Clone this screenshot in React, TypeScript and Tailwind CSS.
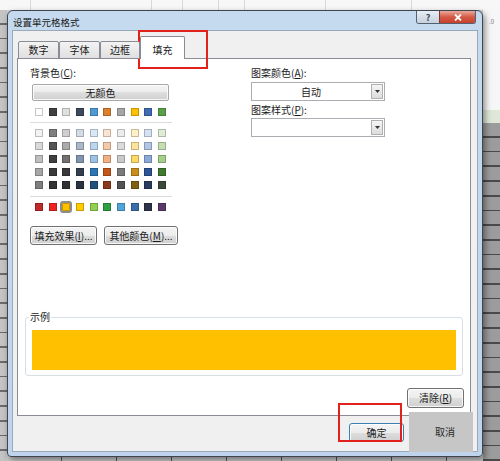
import type { ReactNode } from "react";

const FONT = "font-['Noto_Sans_CJK_SC','Noto_Sans',sans-serif]";

const topRow = ["#ffffff", "#404040", "#e0e0e0", "#3d4a5c", "#4e9bd4", "#d9822b", "#a6a6a6", "#ffc000", "#3f6cb4", "#5aa04a"];

const tintRows = [
  ["#f2f2f2", "#7f7f7f", "#cfcfcf", "#d2dbe6", "#d8e8f6", "#fbe3d3", "#ececec", "#fff0c8", "#d6e1f2", "#e0edd6"],
  ["#d9d9d9", "#555555", "#acacac", "#aab8c9", "#bcd6ee", "#f5c9a8", "#dbdbdb", "#fde49a", "#b3c5e6", "#c4dfb1"],
  ["#bfbfbf", "#3f3f3f", "#737070", "#8395ae", "#9cc2e5", "#f2b083", "#c9c9c9", "#fdd865", "#8da9da", "#a7cf8c"],
  ["#a6a6a6", "#3a3a3a", "#3a3838", "#333f50", "#2e75b5", "#c4581a", "#7b7b7b", "#c98e1b", "#2f5496", "#3f7a2f"],
  ["#7f7f7f", "#333333", "#303030", "#2a3340", "#22507c", "#8a3a1a", "#525252", "#7f6010", "#2a3a60", "#3a4a38"],
];

const standardRow = ["#c0282a", "#ee2222", "#ffc000", "#ffcc00", "#92d050", "#2ea043", "#4fa4d8", "#3a6ea8", "#2e3448", "#5a3a6a"];

function SwatchRow({ colors, selected }: { colors: string[]; selected?: number }) {
  return (
    <div className="flex w-[131px] justify-between">
      {colors.map((c, i) => (
        <div
          key={i}
          className={[
            "h-[8px] w-[8px] shadow-[inset_0_0_0_1px_rgba(0,0,0,0.22)]",
            i === selected ? "rounded-[1px] outline-2 outline-[#8c8c8c]" : "",
          ].join(" ")}
          style={{ backgroundColor: c }}
        />
      ))}
    </div>
  );
}

function WinButton({ children, className = "", isDefault = false }: { children?: ReactNode; className?: string; isDefault?: boolean }) {
  return (
    <div
      className={[
        "flex items-center justify-center rounded-[3px] border bg-[linear-gradient(to_bottom,#f4f4f4_0%,#ececec_50%,#dedede_50%,#d0d0d0_100%)] text-[10px] leading-[14px] text-[#1a1a1a] shadow-[inset_0_0_0_1px_rgba(255,255,255,0.8)]",
        isDefault ? "border-[#3c7fb1] shadow-[inset_0_0_0_1px_#b6dcf4]" : "border-[#707070]",
        className,
      ].join(" ")}
    >
      {children}
    </div>
  );
}

function Combo({ value }: { value?: string }) {
  return (
    <div className="flex h-[19px] w-[134px] items-stretch border border-[#abadb3] bg-white">
      <div className="flex flex-1 items-center justify-center text-[10px] leading-[14px] text-[#1a1a1a]">{value}</div>
      <div className="m-[1px] flex w-[12px] items-center justify-center border border-[#b0b0b0] bg-[linear-gradient(to_bottom,#f5f5f5,#dcdcdc)]">
        <svg width="5" height="3" viewBox="0 0 5 3">
          <path d="M0 0h5L2.5 3z" fill="#333" />
        </svg>
      </div>
    </div>
  );
}

function Tab({ label, width, selected }: { label: string; width: string; selected?: boolean }) {
  return (
    <div
      className={[
        "flex justify-center rounded-t-[2px] border border-[#898c95] text-[10px] leading-[14px] text-[#1a1a1a]",
        width,
        selected
          ? "relative z-10 h-[23px] border-b-0 bg-white pt-[6px]"
          : "h-[18px] pt-[1px] bg-[linear-gradient(to_bottom,#f3f3f3,#e0e0e0)]",
      ].join(" ")}
    >
      {label}
    </div>
  );
}

function Mn({ c }: { c: string }) {
  return <span className="underline underline-offset-1">{c}</span>;
}

export default function App() {
  return (
    <div className={`relative h-[461px] w-[500px] overflow-hidden bg-[#d4d4d4] ${FONT}`}>
      {/* spreadsheet behind the dialog */}
      <div className="flex h-full flex-col">
        <div className="flex h-[10px] bg-[#f7f7f7]">
          <div className="ml-[30px] h-full w-px bg-[#d8d8d8]" />
          <div className="ml-[120px] h-full w-px bg-[#d8d8d8]" />
          <div className="ml-[30px] h-full w-px bg-[#d8d8d8]" />
          <div className="ml-[35px] h-full w-px bg-[#d8d8d8]" />
          <div className="ml-[25px] h-full w-px bg-[#d8d8d8]" />
          <div className="ml-[80px] h-full w-px bg-[#d8d8d8]" />
          <div className="ml-[85px] h-full w-px bg-[#d8d8d8]" />
        </div>
        <div className="flex flex-1">
          <div className="w-[7px] bg-[repeating-linear-gradient(to_bottom,#c4c4c4_0px,#c4c4c4_13px,#6a6a6a_13px,#6a6a6a_14.7px)]" />
          <div className="flex-1 bg-[repeating-linear-gradient(to_right,#cfcfcf_0px,#cfcfcf_54px,#555555_54px,#555555_55px)]" />
          <div className="flex w-[17px] flex-col">
            <div className="h-[100px] bg-[#f6f6f6] pl-[6px] pt-[8px] text-[6px] leading-[8px] text-[#777]">.0</div>
            <div className="h-[13px] bg-[#dfe8d8]" />
            <div className="flex-1 bg-[repeating-linear-gradient(to_bottom,#9c9c9c_0px,#9c9c9c_13px,#4a4a4a_13px,#4a4a4a_14.7px)]" />
          </div>
        </div>
      </div>

      {/* dialog */}
      <div className="absolute left-[7px] top-[10px] flex h-[447px] w-[476px] flex-col rounded-t-[6px] rounded-b-[4px] border border-[#3f4650] bg-[linear-gradient(to_bottom,#c6daef,#bfd4ec)] shadow-[2px_3px_6px_rgba(0,0,0,0.45)]">
        <div className="flex h-[19px] items-start">
          <div className="pl-[5px] pt-[4px] text-[9.5px] leading-[14px] text-[#1a1a1a]">设置单元格格式</div>
          <div className="ml-auto mr-[6px] flex h-[13px] overflow-hidden rounded-b-[3px] border border-t-0 border-[#55606e]">
            <div className="flex w-[22px] items-center justify-center bg-[linear-gradient(to_bottom,#e7edf4,#c5d1de)] text-[9px] font-bold leading-none text-[#3a4450]">?</div>
            <div className="flex w-[36px] items-center justify-center border-l border-[#7a3a30] bg-[linear-gradient(to_bottom,#eba89a,#d45a46_50%,#c7402c)]">
              <svg width="8" height="7" viewBox="0 0 8 7">
                <path d="M1 0.5l6 6M7 0.5l-6 6" stroke="#fff" strokeWidth="1.8" />
              </svg>
            </div>
          </div>
        </div>

        <div className="mx-[4px] flex h-[422px] flex-col border border-[#9aa9b9] bg-[#f0f0f0]">
          {/* tabs */}
          <div className="relative z-10 -mb-px ml-[5px] mt-[5px] flex h-[23px] items-end">
            <Tab label="数字" width="w-[41px] bg-[linear-gradient(to_bottom,#eaf2fb,#c9dcf1)]" />
            <Tab label="字体" width="w-[41px]" />
            <Tab label="边框" width="w-[40px]" />
            <Tab label="填充" width="w-[45px]" selected />
          </div>

          {/* panel */}
          <div className="ml-[4px] flex h-[358px] w-[454px] flex-col border border-[#898c95] bg-white text-[10px] leading-[14px] text-[#1a1a1a]">
            <div className="flex">
              <div className="flex w-[233px] flex-col">
                <div className="ml-[12px] mt-[7px]">背景色(<Mn c="C" />):</div>
                <WinButton className="ml-[14px] mt-[4px] h-[17px] w-[137px] !rounded-[2px] !border-[#a8a8a8]">无颜色</WinButton>
                <div className="ml-[17px] mt-[7px]">
                  <SwatchRow colors={topRow} />
                </div>
                <div className="ml-[12px] mt-[6px] h-px w-[142px] bg-[#dcdcdc]" />
                <div className="ml-[17px] mt-[6px] flex flex-col gap-[5px]">
                  {tintRows.map((row, i) => (
                    <SwatchRow key={i} colors={row} />
                  ))}
                </div>
                <div className="ml-[12px] mt-[7px] h-px w-[142px] bg-[#dcdcdc]" />
                <div className="ml-[17px] mt-[6px]">
                  <SwatchRow colors={standardRow} selected={2} />
                </div>
                <div className="ml-[12px] mt-[15px] flex gap-[7px]">
                  <WinButton className="h-[19px] w-[67px]">填充效果(<Mn c="I" />)...</WinButton>
                  <WinButton className="h-[19px] w-[74px]">其他颜色(<Mn c="M" />)...</WinButton>
                </div>
              </div>
              <div className="flex w-[134px] flex-col">
                <div className="mt-[7px]">图案颜色(<Mn c="A" />):</div>
                <div className="mt-[2px]">
                  <Combo value="自动" />
                </div>
                <div className="mt-[2px]">图案样式(<Mn c="P" />):</div>
                <div className="mt-[1px]">
                  <Combo />
                </div>
              </div>
            </div>

            {/* sample */}
            <div className="relative ml-[7px] mt-[72px] h-[59px] w-[438px] rounded-[3px] border border-[#d5dfe5]">
              <span className="absolute left-[3px] top-[-8px] bg-white px-[1px] text-[10px] leading-[14px]">示例</span>
              <div className="ml-[6px] mt-[12px] h-[40px] w-[424px] bg-[#ffc000]" />
            </div>

            <WinButton className="ml-[389px] mt-[12px] h-[20px] w-[57px]">清除(<Mn c="R" />)</WinButton>
          </div>

          {/* dialog buttons (cancel is hidden under the grey patch) */}
          <div className="mt-[7px] flex gap-[7px] pl-[336px]">
            <WinButton isDefault className="h-[19px] w-[55px]">确定</WinButton>
            <WinButton className="h-[19px] w-[55px]" />
          </div>
        </div>
      </div>

      {/* annotations over the screenshot */}
      <div className="absolute left-[138px] top-[30px] h-[39px] w-[70px] border-2 border-[#e3211c]" />
      <div className="absolute left-[338px] top-[403px] h-[39px] w-[64px] border-2 border-[#e3211c]" />
      <div className="absolute left-[409px] top-[412px] flex h-[40px] w-[64px] items-center justify-center bg-[#c6c6c6] pl-[8px] text-[10px] leading-[14px] text-[#2a2a2a]">
        取消
      </div>
    </div>
  );
}
